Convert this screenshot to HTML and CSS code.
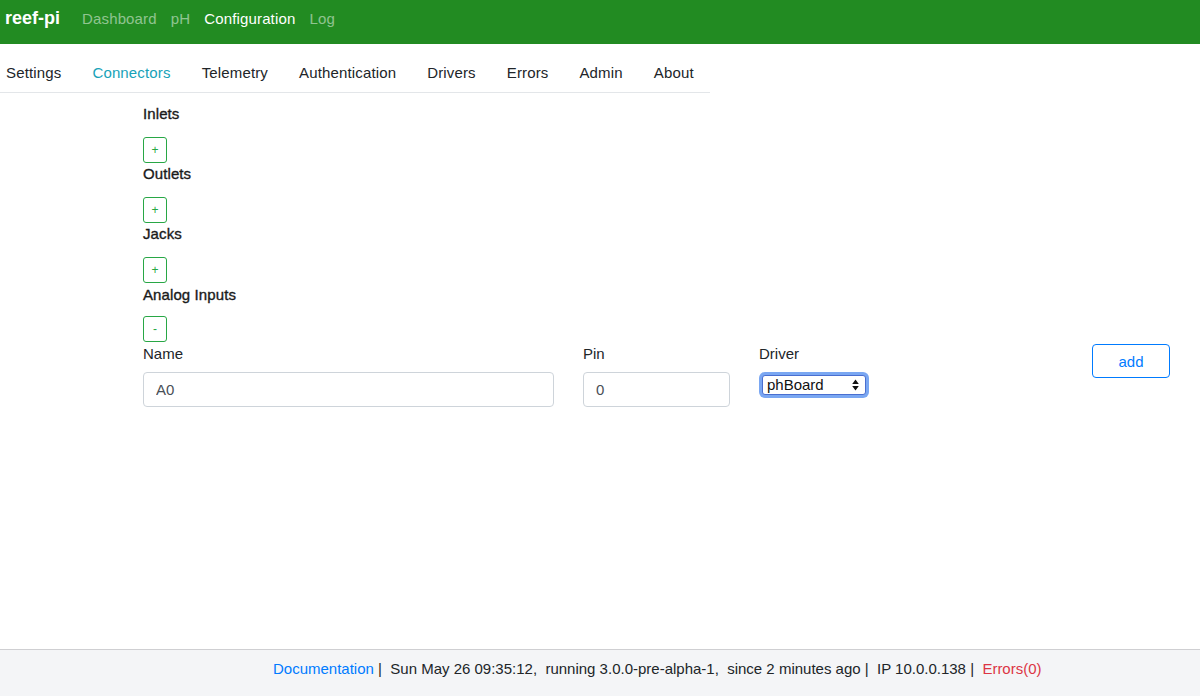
FILE: index.html
```html
<!DOCTYPE html>
<html lang="en">
<head>
<meta charset="utf-8">
<title>reef-pi</title>
<link rel="stylesheet" href="styles.css">
</head>
<body>
<div class="page">
  <nav class="navbar">
    <span class="brand">reef-pi</span>
    <ul class="nav-links">
      <li class="nav-link">Dashboard</li>
      <li class="nav-link">pH</li>
      <li class="nav-link active">Configuration</li>
      <li class="nav-link">Log</li>
    </ul>
  </nav>
  <ul class="tabs">
    <li class="tab">Settings</li>
    <li class="tab active">Connectors</li>
    <li class="tab">Telemetry</li>
    <li class="tab">Authentication</li>
    <li class="tab">Drivers</li>
    <li class="tab">Errors</li>
    <li class="tab">Admin</li>
    <li class="tab">About</li>
  </ul>
  <main class="content">
    <section class="group">
      <div class="group-title">Inlets</div>
      <button class="btn-toggle">+</button>
    </section>
    <section class="group">
      <div class="group-title">Outlets</div>
      <button class="btn-toggle">+</button>
    </section>
    <section class="group">
      <div class="group-title">Jacks</div>
      <button class="btn-toggle">+</button>
    </section>
    <section class="group">
      <div class="group-title">Analog Inputs</div>
      <button class="btn-toggle">-</button>
    </section>
    <div class="form-row">
      <div class="field field-name">
        <label class="field-label">Name</label>
        <input class="input" type="text" value="A0">
      </div>
      <div class="field field-pin">
        <label class="field-label">Pin</label>
        <input class="input" type="text" value="0">
      </div>
      <div class="field field-driver">
        <label class="field-label">Driver</label>
        <div class="select-wrap">
          <select class="select"><option>phBoard</option></select>
          <svg class="select-arrows" width="7" height="12" viewBox="0 0 7 12"><path d="M3.5 0.5 L6.8 5 L0.2 5 Z M3.5 11.5 L6.8 7 L0.2 7 Z" fill="#111"/></svg>
        </div>
      </div>
      <button class="btn-add">add</button>
    </div>
  </main>
  <footer class="footer"><span class="link-doc">Documentation</span> |  Sun May 26 09:35:12,  running 3.0.0-pre-alpha-1,  since 2 minutes ago |  IP 10.0.0.138 |  <span class="link-err">Errors(0)</span></footer>
</div>
</body>
</html>
```
FILE: styles.css
```css
* { box-sizing: border-box; }
html, body { margin: 0; padding: 0; }
body {
  font-family: "Liberation Sans", Arial, sans-serif;
  font-size: 15px;
  color: #212529;
  background: #fff;
}
.page {
  min-height: 100vh;
  display: flex;
  flex-direction: column;
}
.navbar {
  height: 44px;
  background: #228b22;
  display: flex;
  align-items: center;
  padding: 0 0 8px 5px;
}
.brand {
  color: #fff;
  font-weight: bold;
  font-size: 18px;
  margin-right: 15px;
}
.nav-links {
  list-style: none;
  margin: 0;
  padding: 0;
  display: flex;
}
.nav-link {
  padding: 0 7px;
  color: rgba(255, 255, 255, 0.5);
  letter-spacing: 0.15px;
}
.nav-link.active { color: #fff; }
.tabs {
  list-style: none;
  margin: 0;
  padding: 8px 0 0 6px;
  width: 710px;
  height: 49px;
  border-bottom: 1px solid #e3e6e9;
  display: flex;
  align-items: center;
  gap: 31px;
}
.tab { color: #212529; letter-spacing: 0.15px; }
.tab.active { color: #17a2b8; }
.content {
  flex: 1;
  padding: 10px 30px 0 143px;
}
.group {
  display: flex;
  flex-direction: column;
  align-items: flex-start;
}
.group-title {
  height: 22px;
  line-height: 22px;
  margin-bottom: 12px;
  color: #1a1a1a;
  -webkit-text-stroke: 0.35px #1a1a1a;
  letter-spacing: 0.1px;
}
.group:last-of-type .group-title {
  margin-top: 1px;
  margin-bottom: 10px;
}
.btn-toggle {
  width: 24px;
  height: 26px;
  padding: 0;
  border: 1px solid #28a745;
  border-radius: 3px;
  background: #fff;
  color: #28a745;
  font-family: "Liberation Sans", Arial, sans-serif;
  font-size: 12px;
  line-height: 1;
}
.form-row {
  display: flex;
  align-items: flex-start;
  margin-top: 1px;
}
.field {
  display: flex;
  flex-direction: column;
}
.field-label {
  height: 22px;
  line-height: 22px;
  margin-bottom: 7px;
}
.field-name { width: 411px; margin-right: 29px; }
.field-pin { width: 147px; margin-right: 29px; }
.field-driver { width: 120px; }
.input {
  height: 35px;
  width: 100%;
  border: 1px solid #ced4da;
  border-radius: 4px;
  padding: 0 12px;
  font-family: "Liberation Sans", Arial, sans-serif;
  font-size: 15px;
  color: #495057;
  background: #fff;
}
.select-wrap {
  position: relative;
  width: 110px;
}
.select {
  appearance: none;
  -webkit-appearance: none;
  width: 104px;
  height: 20px;
  margin: 3px;
  padding: 0 0 0 4px;
  border: 1px solid #4a6fd0;
  border-radius: 3px;
  box-shadow: 0 0 0 3px #7aa7f2;
  background: #fff;
  font-family: "Liberation Sans", Arial, sans-serif;
  font-size: 15px;
  color: #111;
  line-height: 18px;
}
.select-arrows {
  position: absolute;
  right: 10px;
  top: 7px;
}
.btn-add {
  margin-left: auto;
  margin-top: 1px;
  width: 78px;
  height: 34px;
  border: 1px solid #007bff;
  border-radius: 4px;
  background: #fff;
  color: #007bff;
  font-family: "Liberation Sans", Arial, sans-serif;
  font-size: 15px;
}
.footer {
  height: 47px;
  border-top: 1px solid #cfcfd2;
  background: #f4f5f7;
  padding: 0 0 10px 273px;
  display: flex;
  align-items: center;
  white-space: pre;
  color: #212529;
}
.link-doc { color: #007bff; }
.link-err { color: #dc3545; }
```
